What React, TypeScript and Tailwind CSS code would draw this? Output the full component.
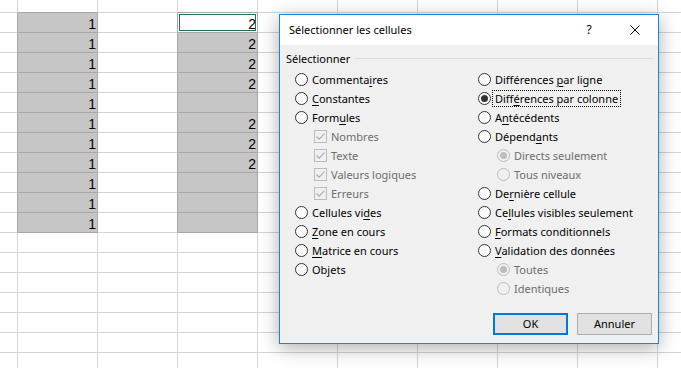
import React from "react";

const NCOLS = 10;
const NROWS = 19;
const colD: (number | null)[] = [2, 2, 2, 2, null, 2, 2, 2, null, null, null];

function isSel(r: number, c: number) {
  return (c === 1 || c === 3) && r >= 1 && r <= 11;
}

function Cell({ r, c }: { r: number; c: number }) {
  const sel = isSel(r, c);
  const active = r === 1 && c === 3;
  const rDark = sel || isSel(r, c + 1);
  const bDark = sel || isSel(r + 1, c);
  let value: number | null = null;
  if (c === 1 && r >= 1 && r <= 11) value = 1;
  if (c === 3 && r >= 1 && r <= 11) value = colD[r - 1];
  return (
    <div
      className={[
        "relative flex items-end justify-end pr-[1px] border-r border-b",
        rDark ? "border-r-[#a8a8a8]" : "border-r-[#d4d4d4]",
        bDark ? "border-b-[#a8a8a8]" : "border-b-[#d4d4d4]",
        active ? "bg-white" : sel ? "bg-[#c6c6c6]" : "bg-white",
      ].join(" ")}
    >
      {active && <div className="absolute inset-[1px] border border-[#217346]" />}
      {value !== null && <span className="leading-[16px] text-[14px] text-black">{value}</span>}
    </div>
  );
}

function Label({ text, u, disabled }: { text: string; u?: number; disabled?: boolean }) {
  const color = disabled ? "text-[#6d6d6d]" : "text-black";
  if (u === undefined) return <span className={`whitespace-nowrap ${color}`}>{text}</span>;
  return (
    <span className={`whitespace-nowrap ${color}`}>
      {text.slice(0, u)}
      <span className="underline underline-offset-[2px] decoration-[1px]">{text.slice(u, u + 1)}</span>
      {text.slice(u + 1)}
    </span>
  );
}

function Radio({ checked, disabled }: { checked?: boolean; disabled?: boolean }) {
  return (
    <span
      className={
        disabled
          ? "w-[13px] h-[13px] shrink-0 rounded-full border border-[#bcbcbc] bg-[#f0f0f0] flex items-center justify-center"
          : "w-[13px] h-[13px] shrink-0 rounded-full border border-[#333333] bg-white flex items-center justify-center"
      }
    >
      {checked && (
        <span
          className={
            disabled
              ? "w-[7px] h-[7px] rounded-full bg-[#bcbcbc]"
              : "w-[7px] h-[7px] rounded-full bg-[#333333]"
          }
        />
      )}
    </span>
  );
}

function Check() {
  return (
    <span className="w-[13px] h-[13px] shrink-0 border border-[#bcbcbc] bg-[#f0f0f0] flex items-center justify-center">
      <svg width="11" height="11" viewBox="0 0 11 11">
        <path d="M1.5 5.5 L4.2 8.2 L9.5 2.5" fill="none" stroke="#a8a8a8" strokeWidth="1.1" />
      </svg>
    </span>
  );
}

type Item =
  | { kind: "radio"; text: string; u?: number; checked?: boolean; focus?: boolean }
  | { kind: "check"; text: string }
  | { kind: "sub"; text: string; checked?: boolean };

const left: Item[] = [
  { kind: "radio", text: "Commentaires", u: 8 },
  { kind: "radio", text: "Constantes", u: 0 },
  { kind: "radio", text: "Formules", u: 4 },
  { kind: "check", text: "Nombres" },
  { kind: "check", text: "Texte" },
  { kind: "check", text: "Valeurs logiques" },
  { kind: "check", text: "Erreurs" },
  { kind: "radio", text: "Cellules vides", u: 11 },
  { kind: "radio", text: "Zone en cours", u: 0 },
  { kind: "radio", text: "Matrice en cours", u: 0 },
  { kind: "radio", text: "Objets", u: 2 },
];

const right: Item[] = [
  { kind: "radio", text: "Différences par ligne", u: 12 },
  { kind: "radio", text: "Différences par colonne", u: 4, checked: true, focus: true },
  { kind: "radio", text: "Antécédents", u: 1 },
  { kind: "radio", text: "Dépendants", u: 6 },
  { kind: "sub", text: "Directs seulement", checked: true },
  { kind: "sub", text: "Tous niveaux" },
  { kind: "radio", text: "Dernière cellule", u: 2 },
  { kind: "radio", text: "Cellules visibles seulement", u: 2 },
  { kind: "radio", text: "Formats conditionnels", u: 0 },
  { kind: "radio", text: "Validation des données", u: 0 },
  { kind: "sub", text: "Toutes", checked: true },
  { kind: "sub", text: "Identiques" },
];

function Row({ item }: { item: Item }) {
  if (item.kind === "check") {
    return (
      <div className="h-[19px] flex items-center gap-[4px] pl-[19px]">
        <Check />
        <Label text={item.text} disabled />
      </div>
    );
  }
  if (item.kind === "sub") {
    return (
      <div className="h-[19px] flex items-center gap-[4px] pl-[19px]">
        <Radio disabled checked={item.checked} />
        <Label text={item.text} disabled />
      </div>
    );
  }
  return (
    <div className="h-[19px] flex items-center gap-[4px]">
      <Radio checked={item.checked} />
      {item.focus ? (
        <span className="h-[17px] -ml-[3px] px-[2px] border border-dotted border-black flex items-center">
          <Label text={item.text} u={item.u} />
        </span>
      ) : (
        <Label text={item.text} u={item.u} />
      )}
    </div>
  );
}

export default function App() {
  const cells: React.ReactNode[] = [];
  for (let r = 0; r < NROWS; r++) {
    for (let c = 0; c < NCOLS; c++) {
      cells.push(<Cell key={`${r}-${c}`} r={r} c={c} />);
    }
  }
  return (
    <div className="relative w-[681px] h-[368px] overflow-hidden bg-white">
      <div className="grid grid-cols-[18px_repeat(9,80px)] grid-rows-[13px_repeat(18,20px)] font-['Liberation_Sans',Arial,sans-serif]">
        {cells}
      </div>

      <div className="absolute left-[279px] top-[14px] w-[380px] h-[330px] border border-[#1883d7] flex flex-col shadow-[0_4px_18px_rgba(0,0,0,0.32)] font-['Noto_Sans',sans-serif] text-[11px] leading-[14px]">
        <div className="h-[30px] bg-white flex items-center shrink-0">
          <span className="pl-[9px] text-black">Sélectionner les cellules</span>
          <div className="ml-auto flex h-full">
            <div className="w-[46px] h-full flex items-center justify-center text-black text-[12px]">?</div>
            <div className="w-[46px] h-full flex items-center justify-center">
              <svg width="10" height="10" viewBox="0 0 10 10">
                <path d="M0.5 0.5 L9.5 9.5 M9.5 0.5 L0.5 9.5" stroke="#000" strokeWidth="1" fill="none" />
              </svg>
            </div>
          </div>
        </div>

        <div className="flex-1 bg-[#f0f0f0] flex flex-col pt-[7px]">
          <div className="h-[14px] flex items-start pl-[6px] pr-[5px]">
            <span className="text-black">Sélectionner</span>
            <div className="flex-1 h-px bg-[#dcdcdc] ml-[5px] mt-[6px]" />
          </div>

          <div className="mt-[4px] pl-[15px] grid grid-cols-[183px_1fr]">
            <div className="flex flex-col">
              {left.map((it) => (
                <Row key={it.text} item={it} />
              ))}
            </div>
            <div className="flex flex-col">
              {right.map((it) => (
                <Row key={it.text} item={it} />
              ))}
            </div>
          </div>

          <div className="mt-auto pb-[8px] pr-[6px] flex justify-end gap-[9px]">
            <button className="w-[75px] h-[22px] bg-[#e1e1e1] border-2 border-[#0078d7] text-black flex items-center justify-center">
              OK
            </button>
            <button className="w-[75px] h-[22px] bg-[#e1e1e1] border border-[#adadad] text-black flex items-center justify-center">
              Annuler
            </button>
          </div>
        </div>
      </div>
    </div>
  );
}
